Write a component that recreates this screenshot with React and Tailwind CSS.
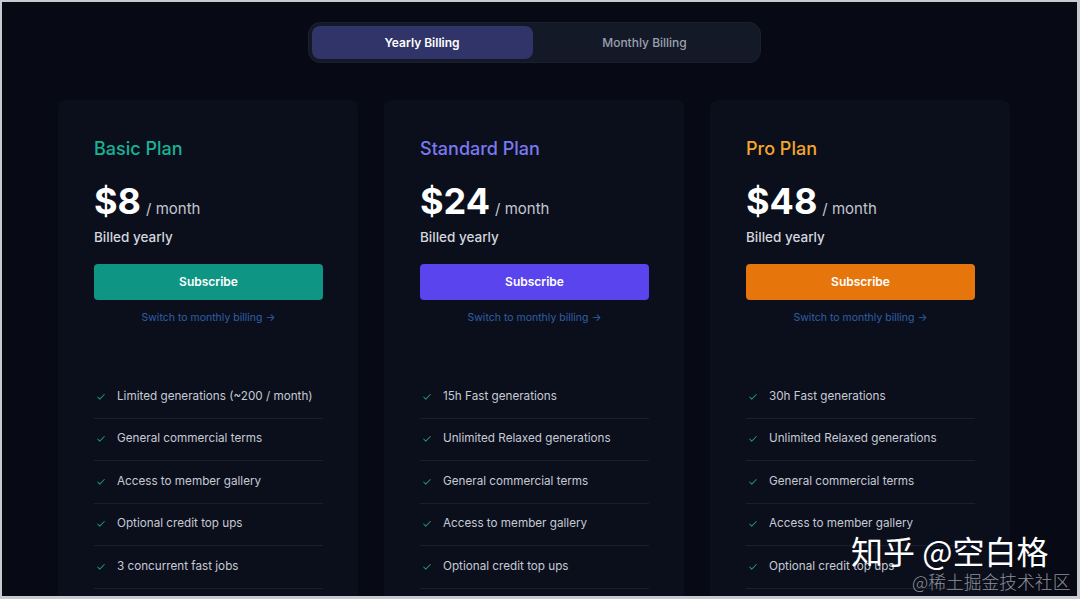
import React, { useState } from 'react';
import { Check } from 'lucide-react';

const plans = [
  {
    name: 'Basic Plan',
    price: '$8',
    titleColor: 'text-[#17b396]',
    buttonColor: 'bg-[#0e9583]',
    features: [
      'Limited generations (~200 / month)',
      'General commercial terms',
      'Access to member gallery',
      'Optional credit top ups',
      '3 concurrent fast jobs',
    ],
  },
  {
    name: 'Standard Plan',
    price: '$24',
    titleColor: 'text-[#7b78f2]',
    buttonColor: 'bg-[#5a44ee]',
    features: [
      '15h Fast generations',
      'Unlimited Relaxed generations',
      'General commercial terms',
      'Access to member gallery',
      'Optional credit top ups',
    ],
  },
  {
    name: 'Pro Plan',
    price: '$48',
    titleColor: 'text-[#f4a62a]',
    buttonColor: 'bg-[#e6760c]',
    features: [
      '30h Fast generations',
      'Unlimited Relaxed generations',
      'General commercial terms',
      'Access to member gallery',
      'Optional credit top ups',
    ],
  },
];

function PlanCard({ plan }) {
  return (
    <div className="w-[300px] shrink-0 rounded-lg bg-[#0b0f1c] pl-[36px] pr-[35px] pt-[36px] pb-[60px]">
      {/* Header */}
      <h3 className={`text-[18px] leading-[26px] font-medium ${plan.titleColor}`}>{plan.name}</h3>
      <div className="mt-[19px] flex items-baseline gap-[5px]">
        <span className="text-[36px] leading-[40px] font-bold text-white">{plan.price}</span>
        <span className="text-[15px] text-[#c3c7d0]">/ month</span>
      </div>
      <p className="mt-[6px] text-[13.5px] leading-[20px] font-medium text-[#d3d6dd]">Billed yearly</p>

      {/* CTA */}
      <button className={`mt-[17px] w-full h-[36px] rounded-[4px] text-[12px] font-semibold text-white ${plan.buttonColor}`}>
        Subscribe
      </button>
      <div className="mt-[10px] text-center text-[10.5px] leading-[16px] text-[#2f5fa8]">
        Switch to monthly billing →
      </div>

      {/* Features */}
      <ul className="mt-[50px]">
        {plan.features.map((f, i) => (
          <li key={i} className="h-[42.5px] flex items-center border-b border-[#1a1f2e]">
            <Check className="w-[10px] h-[10px] ml-[2px] mr-[11px] text-[#1f9474]" strokeWidth={2.5} />
            <span className="text-[11.7px] text-[#c6cad3]">{f}</span>
          </li>
        ))}
      </ul>
    </div>
  );
}

export default function App() {
  const [yearly, setYearly] = useState(true);

  return (
    <div className="w-[1080px] h-[599px] bg-[#c9cacf] pt-[2px] pl-[2px] pr-[3px] pb-[3px] font-['Inter','Noto_Sans',sans-serif]">
      <div className="relative w-full h-full overflow-hidden bg-[#070a14]">
        <div className="ml-[56px] w-[952px] pt-[20px]">
          {/* Billing toggle */}
          <div className="mx-auto w-[453px] h-[41px] p-[3px] flex rounded-xl bg-[#141927] border border-[#1b2030]">
            <button
              onClick={() => setYearly(true)}
              className={`w-[221px] rounded-lg text-[12px] ${yearly ? 'bg-[#313468] text-white font-semibold' : 'text-[#9aa0ae] font-medium'}`}
            >
              Yearly Billing
            </button>
            <button
              onClick={() => setYearly(false)}
              className={`flex-1 rounded-lg text-[12px] ${!yearly ? 'bg-[#313468] text-white font-semibold' : 'text-[#9aa0ae] font-medium'}`}
            >
              Monthly Billing
            </button>
          </div>

          {/* Plans */}
          <div className="mt-[37px] flex gap-[26px]">
            {plans.map((p) => (
              <PlanCard key={p.name} plan={p} />
            ))}
          </div>
        </div>

        {/* Watermark */}
        <div className="absolute left-[849px] top-[528px] text-[32px] leading-[40px] text-white font-['Noto_Sans_CJK_SC',sans-serif]">
          知乎 @空白格
        </div>
        <div className="absolute left-[910px] top-[567px] text-[17.8px] leading-[24px] font-light text-[#8d8f97] font-['Noto_Sans_CJK_SC',sans-serif]">
          @稀土掘金技术社区
        </div>
      </div>
    </div>
  );
}
